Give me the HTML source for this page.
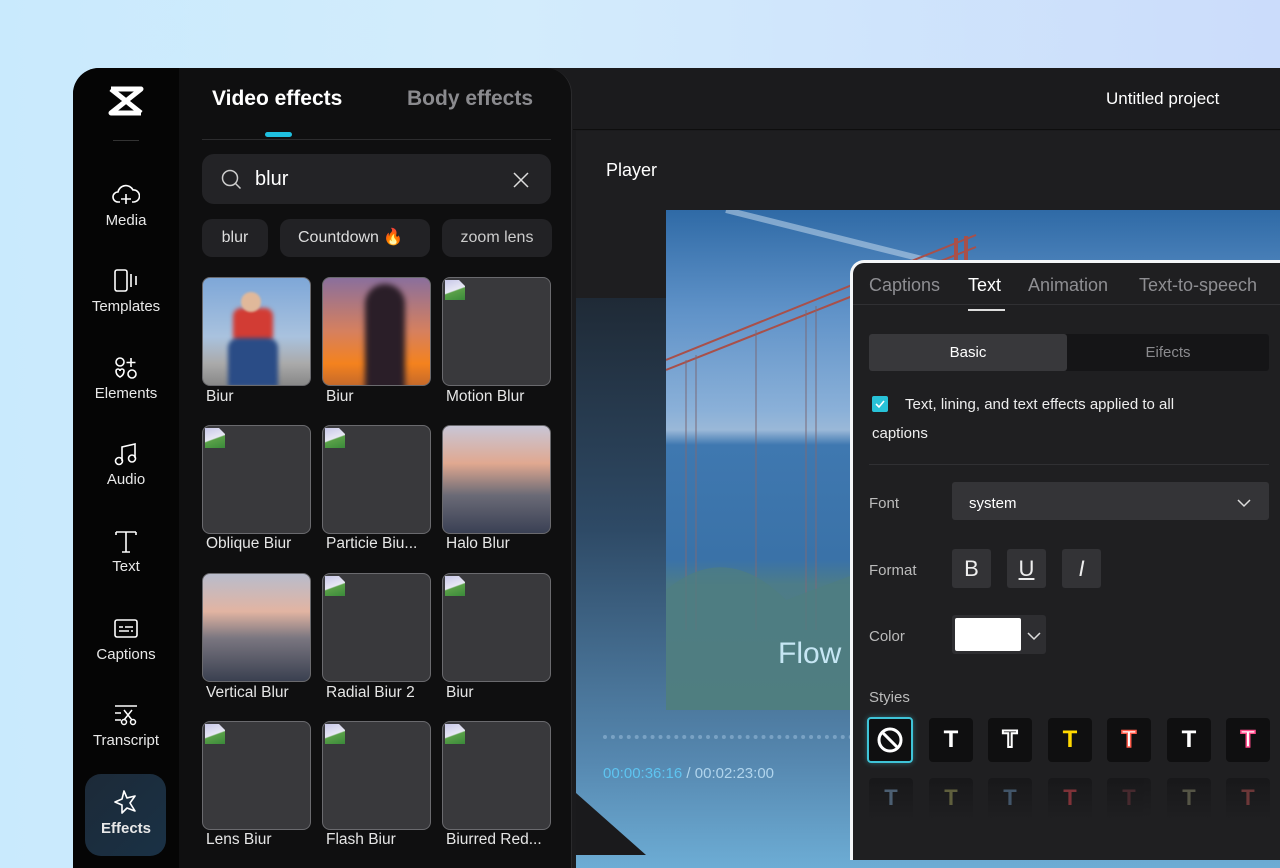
<!DOCTYPE html>
<html><head><meta charset="utf-8"><style>
*{box-sizing:border-box;margin:0;padding:0}
body{width:1280px;height:855px;overflow:hidden;background:linear-gradient(90deg,#c9eafd 0%,#d3ecfc 40%,#cbdcfb 100%);font-family:"Liberation Sans",sans-serif;position:relative;color:#fff}
.abs{position:absolute}
.win{left:73px;top:68px;width:1240px;height:800px;background:#1b1b1d;border-radius:26px 0 0 0;overflow:hidden}
.side{left:0;top:0;width:106px;height:800px;background:#050505}
.nav{position:absolute;left:0;width:106px;text-align:center;font-size:15px;color:#e8e8e8}
.nav svg{display:block;margin:0 auto 4px}
.panel{left:106px;top:0;width:393px;height:800px;background:#0f0f10;border-radius:0 26px 0 0;border-right:1px solid #2a2a2c}
.tile{position:absolute;width:109px;height:109px;border-radius:8px;background:#39393c;border:1px solid #6a6a6e;overflow:hidden}
.lbl{position:absolute;font-size:15.5px;color:#e6e6e6;white-space:nowrap}
.chip{position:absolute;top:151px;height:38px;border-radius:10px;background:#222225;font-size:16px;line-height:38px;color:#ddd;text-align:center}
.bi{position:absolute;left:2px;top:2px;width:20px;height:20px;background:linear-gradient(160deg,#c8c8e8 0%,#e8e8f4 50%,#5aa048 55%,#3a8a3a 100%);clip-path:polygon(0 0,70% 0,100% 30%,100% 100%,0 100%)}
.tp{left:850px;top:260px;width:440px;height:600px;background:#1f1f21;border:3px solid #f4f6f8;border-right:none;border-bottom:none;border-radius:14px 0 0 0;overflow:hidden}
.st{position:absolute;top:455px;width:44px;height:44px;background:#0f0f10;border-radius:4px;font-size:24px;font-weight:bold;text-align:center;line-height:44px}
.st2{position:absolute;top:515px;width:44px;height:40px;background:linear-gradient(#141416,#1f1f21);border-radius:4px;font-size:22px;font-weight:bold;text-align:center;line-height:40px;opacity:.6}
.fb{position:absolute;top:286px;width:39px;height:39px;background:#333336;border-radius:3px;font-size:22px;text-align:center;line-height:39px;color:#eee}
</style></head><body>
<div class="abs win">
  <!-- main -->
  <div class="abs" style="left:500px;top:0;width:740px;height:62px;background:#1b1b1d;border-bottom:1px solid #0e0e0e"></div>
  <div class="abs" style="left:1033px;top:21px;font-size:17px">Untitled project</div>
  <div class="abs" style="left:503px;top:63px;width:737px;height:740px;background:#1e1e20"></div>
  <div class="abs" style="left:503px;top:230px;width:737px;height:580px;background:linear-gradient(180deg,#1f2a36 0%,#2e4a66 40%,#5688b0 80%,#6fb0d8 100%)"></div>
  <div class="abs" style="left:533px;top:92px;font-size:18px">Player</div>
  <div class="abs" style="left:593px;top:142px;width:640px;height:500px;background:linear-gradient(180deg,#2f6aa6 0%,#5f92c8 20%,#8ab0d8 40%,#9ab8d8 44%,#3f78b0 47%,#3a72a8 70%,#4d7c88 75%,#537f80 100%)"></div>
  <svg class="abs" style="left:593px;top:142px" width="640" height="500"><path d="M60 0 L300 60" stroke="#cfe2f2" stroke-width="6" opacity=".5"/><path d="M0 150 L310 25 M0 160 L310 37" stroke="#a8504a" stroke-width="2"/><path d="M290 28 V50 M300 26V50" stroke="#a8504a" stroke-width="4"/><path d="M20 150V420M30 145V420M90 120V420M140 100V420M150 96V420M185 82V420" stroke="#7a6a78" stroke-width="1"/><path d="M0 380 Q60 330 120 390 L200 360 V500 H0z" fill="#4f7e80" opacity=".7"/><text x="112" y="453" font-family="Liberation Sans" font-size="30" fill="#c6e6f4">Flow</text></svg>
  <div class="abs" style="left:530px;top:667px;width:250px;height:0;border-top:4px dotted #8ab0d0;opacity:.7"></div>
  <div class="abs" style="left:530px;top:697px;font-size:15px;color:#5ec4f0">00:00:36:16 <span style="color:#b0d4ec">/ 00:02:23:00</span></div>
  <div class="abs" style="left:503px;top:725px;width:0;height:0;border-left:70px solid #1a1a1c;border-top:62px solid transparent"></div>

  <div class="abs side">
    <svg class="abs" style="left:35px;top:18px" width="36" height="30" viewBox="0 0 36 30"><path d="M3 3 L33 3 L3 27 L33 27 M3 3 L33 27" stroke="#fff" stroke-width="5" fill="none" stroke-linejoin="round"/></svg>
    <div class="abs" style="left:40px;top:72px;width:26px;height:1px;background:#333"></div>
    <div class="nav" style="top:114px"><svg width="28" height="26" viewBox="0 0 28 26"><path d="M8 20 H6 a5 5 0 0 1 0-10 a8 8 0 0 1 15-2 a6 6 0 0 1 1 12 H20 M14 12 v10 M9 17 h10" stroke="#fff" stroke-width="1.6" fill="none"/></svg>Media</div>
    <div class="nav" style="top:200px"><svg width="28" height="26" viewBox="0 0 28 26"><rect x="3" y="2" width="12" height="21" rx="2" stroke="#fff" stroke-width="1.6" fill="none"/><path d="M19 6v13M24 8v9" stroke="#fff" stroke-width="1.6"/></svg>Templates</div>
    <div class="nav" style="top:287px"><svg width="28" height="26" viewBox="0 0 28 26"><circle cx="8" cy="7" r="4" stroke="#fff" stroke-width="1.6" fill="none"/><path d="M19 3v9M14.5 7.5h9" stroke="#fff" stroke-width="1.6"/><path d="M4 16 a2 2 0 0 1 4 0 a2 2 0 0 1 4 0 q0 4-4 6 q-4-2-4-6z" stroke="#fff" stroke-width="1.6" fill="none"/><circle cx="20" cy="19" r="4" stroke="#fff" stroke-width="1.6" fill="none"/></svg>Elements</div>
    <div class="nav" style="top:373px"><svg width="28" height="26" viewBox="0 0 28 26"><path d="M10 20V6l13-3v14" stroke="#fff" stroke-width="1.6" fill="none"/><circle cx="7" cy="20" r="3.5" stroke="#fff" stroke-width="1.6" fill="none"/><circle cx="20" cy="17.5" r="3.5" stroke="#fff" stroke-width="1.6" fill="none"/></svg>Audio</div>
    <div class="nav" style="top:460px"><svg width="28" height="26" viewBox="0 0 28 26"><path d="M4 4h20M14 4v20M4 4v3M24 4v3M10 24h8" stroke="#fff" stroke-width="1.6" fill="none"/></svg>Text</div>
    <div class="nav" style="top:548px"><svg width="28" height="26" viewBox="0 0 28 26"><rect x="3" y="4" width="22" height="17" rx="2" stroke="#fff" stroke-width="1.6" fill="none"/><path d="M7 11h4M13 11h8M7 15h10M19 15h2" stroke="#fff" stroke-width="1.6"/></svg>Captions</div>
    <div class="nav" style="top:634px"><svg width="28" height="26" viewBox="0 0 28 26"><path d="M3 4h22M3 11h6M3 18h6M12 8l8 10M20 8l-8 10" stroke="#fff" stroke-width="1.5" fill="none"/><circle cx="12" cy="20" r="2.5" stroke="#fff" stroke-width="1.5" fill="none"/><circle cx="21" cy="20" r="2.5" stroke="#fff" stroke-width="1.5" fill="none"/></svg>Transcript</div>
    <div class="abs" style="left:12px;top:706px;width:81px;height:82px;border-radius:16px;background:linear-gradient(135deg,#1c2a38,#1a3145)"></div>
    <div class="nav" style="top:720px;font-weight:bold"><svg width="28" height="28" viewBox="0 0 28 28"><path d="M12 3l3 7 8-2-5 7 5 8-8-3-5 5v-8l-7-3 7-3z" stroke="#fff" stroke-width="1.6" fill="none" stroke-linejoin="round"/></svg>Effects</div>
  </div>
  <div class="abs panel">
    <div class="abs" style="left:33px;top:19px;font-size:21px;font-weight:bold">Video effects</div>
    <div class="abs" style="left:228px;top:19px;font-size:21px;font-weight:bold;color:#8a8a8e">Body effects</div>
    <div class="abs" style="left:86px;top:64px;width:27px;height:5px;border-radius:3px;background:#1fc0e0"></div>
    <div class="abs" style="left:23px;top:71px;width:349px;height:1px;background:#2c2c2e"></div>
    <div class="abs" style="left:23px;top:86px;width:349px;height:50px;border-radius:12px;background:#232326"></div>
    <svg class="abs" style="left:42px;top:101px" width="22" height="22" viewBox="0 0 22 22"><circle cx="9" cy="9" r="7.5" stroke="#ccc" stroke-width="1.5" fill="none"/><path d="M14.5 14.5l5 5" stroke="#ccc" stroke-width="1.5"/></svg>
    <div class="abs" style="left:76px;top:100px;font-size:20px">blur</div>
    <svg class="abs" style="left:334px;top:104px" width="16" height="16" viewBox="0 0 16 16"><path d="M1 1l14 14M15 1L1 15" stroke="#ddd" stroke-width="1.5"/></svg>
    <div class="chip" style="left:23px;width:66px">blur</div>
    <div class="chip" style="left:101px;width:150px;text-align:left;padding-left:18px">Countdown <span style="color:#ff7a2a">&#x1F525;</span></div>
    <div class="chip" style="left:263px;width:110px;color:#ccc">zoom lens</div>
    <div class="tile" style="left:23px;top:209px;background:linear-gradient(180deg,#7ea7d8 0%,#a9c2de 55%,#aaa 80%,#888 100%)"><div class="abs" style="left:30px;top:30px;width:40px;height:35px;background:#d23c34;border-radius:8px;filter:blur(2px)"></div><div class="abs" style="left:25px;top:60px;width:50px;height:49px;background:#2a4c86;border-radius:10px 10px 0 0;filter:blur(2px)"></div><div class="abs" style="left:38px;top:14px;width:20px;height:20px;background:#e0b89a;border-radius:50%;filter:blur(1px)"></div></div>
    <div class="tile" style="left:143px;top:209px;background:linear-gradient(180deg,#8a6f9c 0%,#d6805e 50%,#f4821e 80%,#c66a2a 100%)"><div class="abs" style="left:42px;top:6px;width:40px;height:110px;background:#2a1e28;border-radius:20px 20px 0 0;filter:blur(3px)"></div></div>
    <div class="tile" style="left:263px;top:209px"><div class="bi"></div></div>
    <div class="lbl" style="left:27px;top:320px">Biur</div><div class="lbl" style="left:147px;top:320px">Biur</div><div class="lbl" style="left:267px;top:320px">Motion Blur</div>
    <div class="tile" style="left:23px;top:357px"><div class="bi"></div></div><div class="tile" style="left:143px;top:357px"><div class="bi"></div></div>
    <div class="tile" style="left:263px;top:357px;background:linear-gradient(180deg,#c8c6d6 0%,#e0a890 35%,#6a6a76 65%,#3a4054 100%)"></div>
    <div class="lbl" style="left:27px;top:467px">Oblique Biur</div><div class="lbl" style="left:147px;top:467px">Particie Biu...</div><div class="lbl" style="left:267px;top:467px">Halo Blur</div>
    <div class="tile" style="left:23px;top:505px;background:linear-gradient(180deg,#b8bccc 0%,#e2b4a2 35%,#7a7680 60%,#3a4050 100%)"></div>
    <div class="tile" style="left:143px;top:505px"><div class="bi"></div></div><div class="tile" style="left:263px;top:505px"><div class="bi"></div></div>
    <div class="lbl" style="left:27px;top:616px">Vertical Blur</div><div class="lbl" style="left:147px;top:616px">Radial Biur 2</div><div class="lbl" style="left:267px;top:616px">Biur</div>
    <div class="tile" style="left:23px;top:653px"><div class="bi"></div></div><div class="tile" style="left:143px;top:653px"><div class="bi"></div></div><div class="tile" style="left:263px;top:653px"><div class="bi"></div></div>
    <div class="lbl" style="left:27px;top:763px">Lens Biur</div><div class="lbl" style="left:147px;top:763px">Flash Biur</div><div class="lbl" style="left:267px;top:763px">Biurred Red...</div>
  </div>
</div>
<!-- text panel -->
<div class="abs tp">
  <div class="abs" style="left:16px;top:12px;font-size:18px;color:#8e8e92">Captions</div>
  <div class="abs" style="left:115px;top:12px;font-size:18px;color:#fff">Text</div>
  <div class="abs" style="left:115px;top:46px;width:37px;height:2px;background:#ddd"></div>
  <div class="abs" style="left:175px;top:12px;font-size:18px;color:#8e8e92">Animation</div>
  <div class="abs" style="left:286px;top:12px;font-size:18px;color:#8e8e92">Text-to-speech</div>
  <div class="abs" style="left:0;top:41px;width:440px;height:1px;background:#303033"></div>
  <div class="abs" style="left:16px;top:71px;width:400px;height:37px;background:#151517;border-radius:3px"></div>
  <div class="abs" style="left:16px;top:71px;width:198px;height:37px;background:#38383b;border-radius:3px;text-align:center;line-height:37px;font-size:15px">Basic</div>
  <div class="abs" style="left:214px;top:71px;width:202px;height:37px;text-align:center;line-height:37px;font-size:15px;color:#8a8a8e">Eifects</div>
  <div class="abs" style="left:19px;top:133px;width:16px;height:16px;background:#28c2d8;border-radius:2px"><svg width="16" height="16"><path d="M4 8l3 3 5-6" stroke="#fff" stroke-width="1.6" fill="none"/></svg></div>
  <div class="abs" style="left:52px;top:133px;font-size:15px;color:#eee">Text, lining, and text effects applied to all</div>
  <div class="abs" style="left:19px;top:162px;font-size:15px;color:#eee">captions</div>
  <div class="abs" style="left:16px;top:201px;width:400px;height:1px;background:#303033"></div>
  <div class="abs" style="left:16px;top:232px;font-size:15px;color:#bbb">Font</div>
  <div class="abs" style="left:99px;top:219px;width:317px;height:38px;background:#343437;border-radius:3px"></div>
  <div class="abs" style="left:116px;top:232px;font-size:15px">system</div>
  <svg class="abs" style="left:384px;top:235px" width="14" height="10"><path d="M1 2l6 6 6-6" stroke="#ddd" stroke-width="1.5" fill="none"/></svg>
  <div class="abs" style="left:16px;top:299px;font-size:15px;color:#bbb">Format</div>
  <div class="fb" style="left:99px">B</div>
  <div class="fb" style="left:154px;text-decoration:underline">U</div>
  <div class="fb" style="left:209px;font-style:italic">I</div>
  <div class="abs" style="left:16px;top:365px;font-size:15px;color:#bbb">Color</div>
  <div class="abs" style="left:99px;top:352px;width:94px;height:39px;background:#2e2e31;border-radius:3px"></div>
  <div class="abs" style="left:102px;top:355px;width:66px;height:33px;background:#fff;border-radius:2px"></div>
  <svg class="abs" style="left:174px;top:368px" width="14" height="10"><path d="M1 2l6 6 6-6" stroke="#ddd" stroke-width="1.5" fill="none"/></svg>
  <div class="abs" style="left:16px;top:426px;font-size:15px;color:#bbb">Styies</div>
  <div class="st" style="left:14px;top:454px;width:46px;height:46px;border:2px solid #3fc4d8;box-shadow:0 0 6px #3fc4d870"><svg width="30" height="30" style="margin-top:6px" viewBox="0 0 30 30"><circle cx="15" cy="15" r="11" stroke="#fff" stroke-width="3" fill="none"/><path d="M7 7l16 16" stroke="#fff" stroke-width="3"/></svg></div>
  <div class="st" style="left:76px">T</div>
  <div class="st" style="left:135px;color:#0f0f10;-webkit-text-stroke:2px #fff">T</div>
  <div class="st" style="left:195px;color:#ffd800">T</div>
  <div class="st" style="left:254px;color:#fff;-webkit-text-stroke:1.5px #ff5a4a">T</div>
  <div class="st" style="left:314px">T</div>
  <div class="st" style="left:373px;color:#fff;-webkit-text-stroke:1.5px #ff4a8a">T</div>
  <div class="st2" style="left:16px;color:#6a8aa8">T</div><div class="st2" style="left:76px;color:#8a8a50">T</div><div class="st2" style="left:135px;color:#5a7a9a">T</div><div class="st2" style="left:195px;color:#c04048">T</div><div class="st2" style="left:254px;color:#603038">T</div><div class="st2" style="left:314px;color:#7a7a60">T</div><div class="st2" style="left:373px;color:#a04848">T</div>
</div>
</body></html>
